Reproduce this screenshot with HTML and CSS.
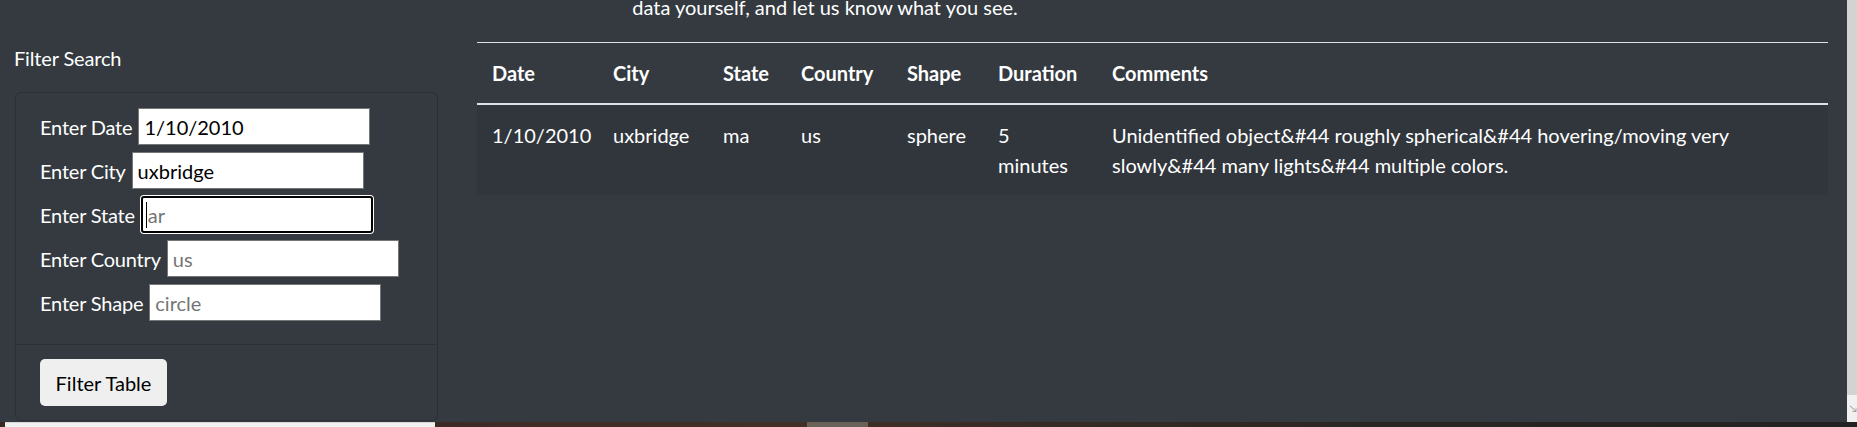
FILE: index.html
```html
<!DOCTYPE html>
<html lang="en">
<head>
<meta charset="utf-8">
<title>UFO Sightings</title>
<link rel="stylesheet" href="styles.css">
</head>
<body>
<div class="screen">
  <div class="viewport">
    <div class="main">
      <p class="intro">data yourself, and let us know what you see.</p>
      <div class="row">
        <aside class="sidebar">
          <h4 class="side-title">Filter Search</h4>
          <form class="card">
            <div class="card-body">
              <div class="field"><label>Enter Date</label><input class="inp" type="text" value="1/10/2010"></div>
              <div class="field"><label>Enter City</label><input class="inp" type="text" value="uxbridge"></div>
              <div class="field"><label>Enter State</label><span class="focus-wrap"><input class="inp focused" type="text" placeholder="ar"><span class="caret"></span></span></div>
              <div class="field"><label>Enter Country</label><input class="inp" type="text" placeholder="us"></div>
              <div class="field"><label>Enter Shape</label><input class="inp" type="text" placeholder="circle"></div>
            </div>
            <div class="card-footer">
              <button type="button" class="btn">Filter Table</button>
            </div>
          </form>
        </aside>
        <section class="content">
          <table class="table">
            <colgroup>
              <col class="c-date"><col class="c-city"><col class="c-state"><col class="c-country"><col class="c-shape"><col class="c-duration"><col class="c-comments">
            </colgroup>
            <thead>
              <tr><th>Date</th><th>City</th><th>State</th><th>Country</th><th>Shape</th><th>Duration</th><th>Comments</th></tr>
            </thead>
            <tbody>
              <tr><td>1/10/2010</td><td>uxbridge</td><td>ma</td><td>us</td><td>sphere</td><td>5 minutes</td><td>Unidentified object&amp;#44 roughly spherical&amp;#44 hovering/moving very slowly&amp;#44 many lights&amp;#44 multiple colors.</td></tr>
            </tbody>
          </table>
        </section>
      </div>
    </div>
    <div class="scrollbar"><div class="sb-corner">&#8600;</div></div>
  </div>
  <div class="taskbar">
    <div class="tb-a"></div><div class="tb-b"></div><div class="tb-c"></div><div class="tb-d"></div><div class="tb-e"></div>
  </div>
</div>
</body>
</html>
```
FILE: styles.css
```css
* { box-sizing: border-box; }
html, body { margin: 0; padding: 0; }
body {
  width: 1857px;
  height: 427px;
  overflow: hidden;
  background: #343a40;
  color: #fff;
  font-family: "Lato", "Open Sans", sans-serif;
  font-size: 20px;
  line-height: 30px;
}
.screen { display: flex; flex-direction: column; height: 427px; }
.viewport { display: flex; height: 422px; overflow: hidden; }
.main { width: 1847px; }
.intro {
  margin: -8px 0 0 0;
  width: 1650px;
  height: 30px;
  text-align: center;
}
.row { display: flex; margin-top: 20px; }
.sidebar { width: 438px; padding-left: 15px; }
.side-title {
  margin: 1px 0 19px -1px;
  font-size: 20px;
  font-weight: 400;
  line-height: 30px;
  letter-spacing: -0.15px;
}
.card {
  border: 1px solid #2b3035;
  border-radius: 6px;
  margin: 0;
}
.card-body {
  padding: 15px 24px 23px;
  display: flex;
  flex-direction: column;
  gap: 7px;
}
.field { display: flex; align-items: center; height: 37px; gap: 6px; }
.field label { white-space: nowrap; letter-spacing: -0.2px; }
.inp {
  width: 232px;
  height: 37px;
  border: 1px solid #767676;
  background: #fff;
  color: #000;
  font-family: inherit;
  font-size: 20px;
  padding: 0 5px;
  margin: 0;
  border-radius: 0;
  outline: none;
}
.inp::placeholder { color: #757575; }
.focus-wrap { position: relative; display: inline-block; height: 37px; }
.inp.focused {
  border: 2px solid #000;
  border-radius: 3px;
  box-shadow: 0 0 0 1px #fff;
  padding-left: 5px;
}
.caret {
  position: absolute;
  left: 5px;
  top: 6px;
  width: 1px;
  height: 26px;
  background: #000;
}
.card-footer {
  border-top: 1px solid #2b3035;
  padding: 14px 24px 14px;
}
.btn {
  width: 127px;
  height: 47px;
  background: #efefef;
  color: #000;
  border: none;
  border-radius: 5px;
  font-family: inherit;
  font-size: 20px;
  padding: 0;
}
.content { margin-left: 39px; width: 1351px; }
.table {
  width: 1351px;
  border-collapse: collapse;
  table-layout: fixed;
  color: #fff;
}
.c-date { width: 121px; }
.c-city { width: 110px; }
.c-state { width: 78px; }
.c-country { width: 106px; }
.c-shape { width: 91px; }
.c-duration { width: 114px; }
.c-comments { width: 731px; }
.table th, .table td {
  padding: 15px;
  text-align: left;
  vertical-align: top;
  line-height: 30px;
}
.table th {
  font-weight: 700;
  border-top: 1px solid #dee2e6;
  border-bottom: 2px solid #dee2e6;
}
.table tbody tr { background: #31363c; }
.scrollbar {
  width: 10px;
  height: 422px;
  background: #d3d3d3;
  display: flex;
  flex-direction: column;
  justify-content: flex-end;
}
.sb-corner {
  height: 27px;
  background: #f1f1f1;
  color: #9a9a9a;
  font-size: 10px;
  line-height: 27px;
  overflow: hidden;
  text-align: right;
}
.taskbar { display: flex; height: 5px; }
.tb-a { width: 5px; background: #3a2822; }
.tb-b { width: 430px; background: #f0f0f0; border-top: 1px solid #d8d8d8; }
.tb-c { width: 372px; background: linear-gradient(90deg, #3e2a25, #413126); }
.tb-d { width: 61px; background: #6a6158; }
.tb-e { flex: 1; background: linear-gradient(90deg, #3e2e26, #2a2622 50%, #222222); }
```
